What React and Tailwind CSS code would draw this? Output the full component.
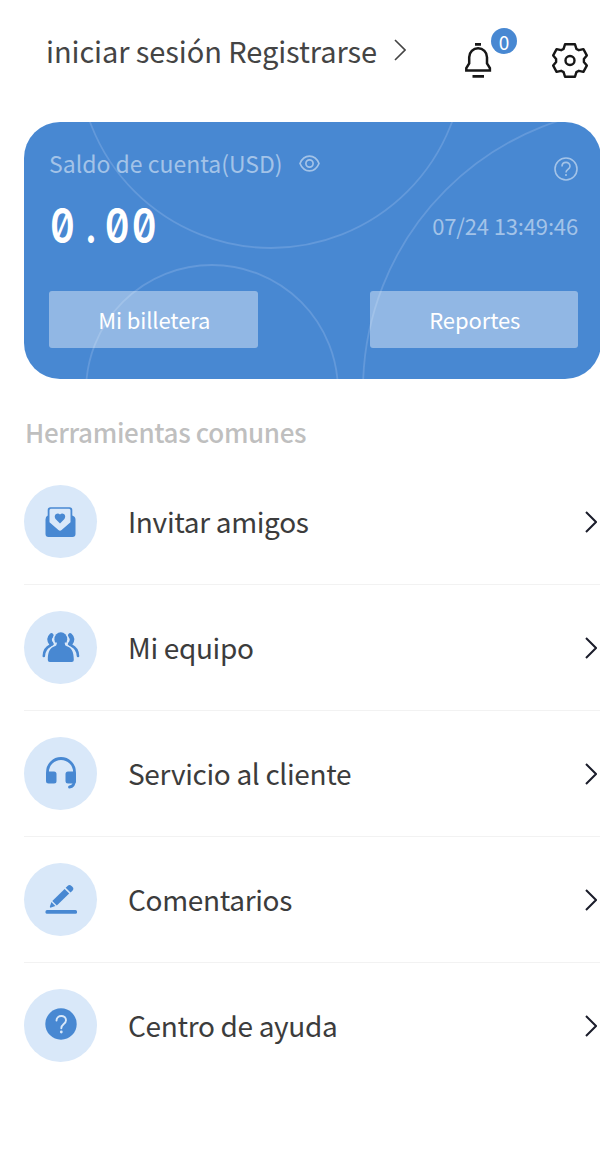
const InviteIcon = () => (
    <svg className="mt-[3px]" width="31" height="31" viewBox="0 0 31 31">
        <path fill="#4888d2" d="M2.700 8.500V3A2.800 2.800 0 0 1 5.500.2h19A2.800 2.800 0 0 1 27.300 3v5.500q3.200 1 3.200 4V27a3 3 0 0 1-3 3H3.500a3 3 0 0 1-3-3V12.500q0-3 2.200-4z" />
        <path fill="#d9e8f9" d="M4.500 3.300a1.500 1.500 0 0 1 1.500-1.500h18a1.500 1.500 0 0 1 1.500 1.500v12L16.600 23a2.400 2.400 0 0 1-3.200 0L4.500 15.300z" />
        <path fill="#4888d2" d="M15 16.500 10.800 12.300C7.800 8.500 12 4.800 15 7.500c3-2.700 7.200 1 4.200 4.800z" />
    </svg>
);

const TeamIcon = () => (
    <svg width="38" height="32" viewBox="0 0 38 32" fill="#4888d2">
        <g fill="none" stroke="#4888d2" strokeLinecap="round">
            <path strokeWidth="4.500" d="M9.500 4.500C6.800 7 7 10 9.500 13M28.100 4.500c2.700 2.500 2.500 5.500 0 8.500" />
            <path strokeWidth="2.600" d="M8.500 14.500C4 16.500 2 20 1.800 25M29.300 14.500c4.500 2 6.500 5.500 6.700 10.500" />
        </g>
        <g stroke="#d9e8f9" strokeWidth="3" paintOrder="stroke">
            <ellipse cx="18.800" cy="8.200" rx="6.400" ry="7" />
            <path d="M14.800 13h8q0 1.500 1.500 2c5 1.500 7.500 5 7.500 14q0 2-2 2h-22q-2 0-2-2c0-9 2.500-12.500 7.500-14q1.500-.5 1.500-2z" />
        </g>
        <path d="M14.800 11h8v4h-8z" />
    </svg>
);

const SupportIcon = () => (
    <svg width="32" height="32" viewBox="0 0 32 32">
        <path fill="none" stroke="#4888d2" strokeWidth="2.800" strokeLinecap="round" d="M2.500 18v-3a13.300 13.300 0 0 1 27 0v8q0 6.500-5 7" />
        <rect x="1" y="14.500" width="10.500" height="12" rx="2.500" fill="#4888d2" />
        <rect x="20.500" y="14.500" width="10.500" height="12" rx="2.500" fill="#4888d2" />
    </svg>
);

const FeedbackIcon = () => (
    <svg width="32" height="32" viewBox="0 0 32 32" fill="#4888d2">
        <path d="M7.300 18 19.600 6l4.600 4.600-12.400 12z" />
        <path d="m20.700 4.800 1.800-1.900a2.900 2.900 0 0 1 4 0l.9.9a2.900 2.900 0 0 1 0 4l-1.900 1.800z" />
        <path d="m6.400 19.100 4 4-4.400 1.500q-1.400.4-1.100-1z" />
        <rect x="0.500" y="27" width="31.500" height="3.700" rx="1.500" />
    </svg>
);

const HelpIcon = () => (
    <svg className="-mt-[2px] ml-px" width="32" height="32" viewBox="0 0 32 32">
        <circle cx="16" cy="16" r="15.700" fill="#4888d2" />
        <path fill="none" stroke="#d9e8f9" strokeWidth="1.900" strokeLinecap="round" d="M11.500 12.500c0-6 9.500-6 9.500-.3 0 3.800-4.700 3.800-4.700 8" />
        <circle cx="16.300" cy="24" r="1.400" fill="#d9e8f9" />
    </svg>
);

const Chevron = ({ className }) => (
    <svg className={className} viewBox="0 0 12 22" fill="none" stroke="currentColor">
        <path d="M1 1 11 11 1 21" />
    </svg>
);

const TOOLS = [
    { label: "Invitar amigos", icon: InviteIcon },
    { label: "Mi equipo", icon: TeamIcon },
    { label: "Servicio al cliente", icon: SupportIcon },
    { label: "Comentarios", icon: FeedbackIcon },
    { label: "Centro de ayuda", icon: HelpIcon },
];

const Header = () => (
    <header className="flex h-[122px] items-start pl-[46px] pr-3">
        <button className="mt-[27px] flex items-center whitespace-nowrap text-[29px] leading-[46px] tracking-[-0.08px] text-[#444]">
            iniciar sesión Registrarse
            <Chevron className="ml-[17px] h-[22px] w-3 stroke-[1.6]" />
        </button>
        <div className="ml-auto flex gap-[60px] pt-[42px] text-[#171717]">
            <div className="relative">
                <svg width="28" height="37" viewBox="0 0 28 37" fill="none" stroke="currentColor" strokeWidth="2.5">
                    <path d="M11 2.400h6M8.500 34.300h11.500" strokeWidth="2.800" />
                    <path d="M2.300 28.500v-2.300l2.900-4.700v-6.300a8.900 8.900 0 0 1 17.800 0v6.300l2.900 4.700v2.300z" />
                </svg>
                <span className="absolute -top-[14px] left-[27px] flex size-[26px] items-center justify-center rounded-full bg-[#4888d2] text-[19px] leading-none text-white">0</span>
            </div>
            <svg width="36" height="37" viewBox="0 0 36 37" fill="none" stroke="currentColor" strokeWidth="2.400" strokeLinejoin="round">
                <path d="M13 2.300h10l1.400 4.600 2.500 1.300 4.500-1.100 3.400 6.300-2.900 3.700v2.800l2.900 3.700-3.400 6.300-4.500-1.100-2.500 1.300-1.400 4.600h-10l-1.400-4.600-2.500-1.300-4.500 1.100-3.400-6.300 2.900-3.700v-2.800l-2.900-3.700 3.400-6.300 4.500 1.100 2.500-1.300z" />
                <circle cx="18" cy="18.500" r="4.500" />
            </svg>
        </div>
    </header>
);

const BalanceCard = () => (
    <section className="relative ml-6 flex h-[257px] w-[577px] flex-col overflow-hidden rounded-[36px] bg-[#4888d2] pl-[25px] pr-[23px] text-[#a3c3e8]">
        <svg className="absolute inset-0" width="577" height="257" fill="none" stroke="#6399da" strokeWidth="1.800">
            <circle cx="247" cy="-67" r="193" />
            <circle cx="188" cy="269" r="126" />
            <circle cx="622" cy="268" r="283" />
        </svg>
        <div className="relative flex h-[59px] items-start justify-between pt-6">
            <div className="flex items-center gap-4 text-[23px] leading-[34px]">
                <span>Saldo de cuenta(USD)</span>
                <svg width="21" height="17" viewBox="0 0 21 17" fill="none" stroke="currentColor" strokeWidth="1.700">
                    <path d="M1 8.500C5-1.300 16-1.300 20 8.500 16 18.300 5 18.300 1 8.500z" />
                    <circle cx="10.500" cy="8.500" r="3.600" />
                </svg>
            </div>
            <svg className="mt-[11px]" width="24" height="24" viewBox="0 0 24 24" fill="none" stroke="currentColor" strokeWidth="1.600">
                <circle cx="12" cy="12" r="11" />
                <path d="M8 9.500c0-5.500 8-5.500 8-.3 0 3.200-4 3.200-4 6.300" />
                <path d="M12 17v2" />
            </svg>
        </div>
        <div className="relative flex h-[90px] items-center justify-between">
            <span className="ml-px origin-left scale-x-80 font-[Inter] text-[48px] font-semibold leading-none tracking-[2.800px] text-white slashed-zero tabular-nums">
                0<span className="inline-block w-[34.500px] pl-[3px] text-center">.</span>00
            </span>
            <time className="-mt-[2px] text-[22px] leading-[34px] tracking-[-0.15px]">07/24 13:49:46</time>
        </div>
        <div className="relative mt-auto mb-[31px] flex justify-between text-[22px] tracking-[-0.1px] text-white">
            <button className="h-[57px] w-[208.500px] rounded-[3px] bg-white/40 pl-[2px]">Mi billetera</button>
            <button className="h-[57px] w-[208.500px] rounded-[3px] bg-white/40 pl-[2px]">Reportes</button>
        </div>
    </section>
);

const App = () => (
    <div className="h-[1158px] w-[600px] overflow-hidden bg-white font-['Noto_Sans_CJK_SC',sans-serif]">
        <Header />
        <BalanceCard />
        <h2 className="mt-[35px] ml-[25px] text-[26px] font-medium leading-[36px] tracking-[-0.35px] text-[#bfbfbf]">Herramientas comunes</h2>
        <ul className="mt-[9px] ml-6">
            {TOOLS.map(({ label, icon: Icon }) => (
                <li key={label} className="flex h-[125.900px] items-center border-b border-[#f2f2f2] pr-[3px] last:border-transparent">
                    <span className="flex size-[73px] shrink-0 items-center justify-center rounded-full bg-[#d9e8f9]">
                        <Icon />
                    </span>
                    <span className="ml-[31px] text-[28px] tracking-[-0.33px] text-[#3c3c3c]">{label}</span>
                    <Chevron className="mt-[2px] ml-auto h-[22px] w-3 stroke-2 text-[#1b1d2b]" />
                </li>
            ))}
        </ul>
    </div>
);

export default App;
